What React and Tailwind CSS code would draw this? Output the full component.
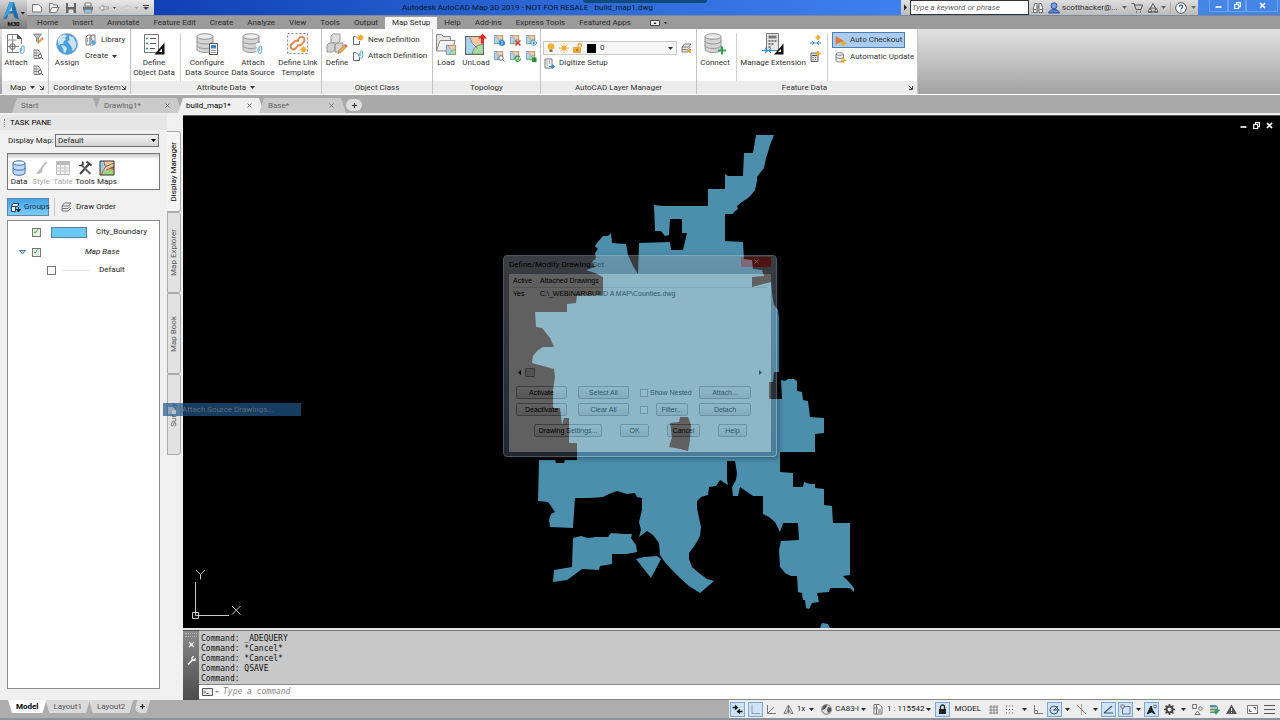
import React from 'react';

const menuTabs = [
  'Home', 'Insert', 'Annotate', 'Feature Edit', 'Create', 'Analyze', 'View', 'Tools',
  'Output', 'Map Setup', 'Help', 'Add-ins', 'Express Tools', 'Featured Apps',
];

const commandHistory = ['_ADEQUERY', '*Cancel*', '*Cancel*', 'QSAVE', ''];

// Small svg wrapper, every icon is drawn in its own pixel grid
function Svg({ w, h = w, children, className = '' }) {
  return (
    <svg width={w} height={h} viewBox={`0 0 ${w} ${h}`} fill="none" className={`shrink-0 ${className}`} aria-hidden="true">
      {children}
    </svg>
  );
}

function Caret({ className = '' }) {
  return (
    <Svg w={5} h={3} className={className}>
      <path d="M0 0h5L2.500 3z" fill="currentColor" />
    </Svg>
  );
}

function Launcher() {
  return (
    <Svg w={5}>
      <path d="M0.500 0.500L4 4M4.500 1v3.500H1" stroke="#444" />
    </Svg>
  );
}

/* ---------- ribbon icons ---------- */

const Star = ({ x, y }) => (
  <g transform={`translate(${x} ${y})`} stroke="#efa92b" strokeWidth="1.300">
    <path d="M0-3v6M-3 0h6M-2-2l4 4M2-2l-4 4" />
  </g>
);

const Clip = ({ x, y }) => (
  <path
    transform={`translate(${x} ${y})`}
    d="M0 3v3.500a1.700 1.700 0 0 0 3.600 0V2a1.200 1.200 0 0 0-2.400 0v4"
    stroke="#4b9fd0"
    strokeWidth="0.900"
  />
);

const Cylinder = ({ x = 0, y = 0 }) => (
  <g transform={`translate(${x} ${y})`} stroke="#8a8a8a" strokeWidth="0.900">
    <path d="M1 3.500v13c0 1.500 3.500 3 8 3s8-1.500 8-3v-13" fill="#d5d5d5" />
    <path d="M1 8c0 1.500 3.500 3 8 3s8-1.500 8-3M1 12.500c0 1.500 3.500 3 8 3s8-1.500 8-3" />
    <ellipse cx="9" cy="3.500" rx="8" ry="2.800" fill="#ececec" />
  </g>
);

const MapTile = ({ s = 1, x = 0, y = 0 }) => (
  <g transform={`translate(${x} ${y}) scale(${s})`}>
    <path d="M0 0h18v18H0z" fill="#a9d3f3" />
    <path d="M4 0h14v9l-6 3-5-5z" fill="#f7c9a3" />
    <path d="M18 8v10H7c0-6 4-10 11-10z" fill="#a7dda0" />
    <path d="M4 0l3 7 5 5M7 18c0-6 4-10 11-10" stroke="#777" strokeWidth="0.800" />
    <path d="M0.500 0.500h17v17H0.500z" stroke="#666" strokeWidth="1" />
  </g>
);

const AttachIcon = () => (
  <Svg w={22}>
    <path d="M2.500 1.500h10l4 4v14h-14z" fill="#fff" stroke="#777" />
    <path d="M12.500 1.500v4h4" fill="#555" stroke="#555" />
    <path d="M2.500 13.500h14M7.500 1.500v18M2.500 7h9" stroke="#888" strokeWidth="0.900" />
    <circle cx="7.500" cy="13.500" r="2.800" stroke="#666" fill="#e8e8e8" />
    <path d="M7.500 10v7M4 13.500h7" stroke="#666" strokeWidth="0.800" />
    <path d="M14 11h6v10h-6z" fill="#fff" />
    <Clip x={15.500} y={12} />
  </Svg>
);

const FilterIcon = () => (
  <Svg w={11}>
    <path d="M0.500 1h8L5.500 5v5l-2-1.500V5z" fill="#bbb" stroke="#777" strokeWidth="0.800" />
    <path d="M5.500 9.500L9.500 5.500" stroke="#e9a23a" strokeWidth="2" />
    <path d="M9 6l1-1" stroke="#d66" strokeWidth="2" />
  </Svg>
);

const SheetSearchIcon = () => (
  <Svg w={11}>
    <path d="M1 1h4l2.500 2.500V9.500H1z" stroke="#777" fill="#fff" strokeWidth="0.900" />
    <path d="M1 4h6M1 6.500h5M3 1v8.500" stroke="#777" strokeWidth="0.800" />
    <circle cx="7" cy="7" r="1.800" stroke="#666" fill="#eee" strokeWidth="0.900" />
    <path d="M8.300 8.300l2 2" stroke="#555" />
  </Svg>
);

const GlobeIcon = () => (
  <Svg w={22}>
    <circle cx="11" cy="11" r="10.500" fill="#4a9fdc" stroke="#8da8bb" strokeWidth="0.800" />
    <path d="M2 6c2-3 4-4 7-4.500l2 1.500-2 2 1 2-2 1-1 3-3 0-1 2-1-4zM13 3l4 1 3.500 6-1 5-3 3-1-4-2-3-2-2 2-2zM5 12l4 1 2 2-1 4-2 1-1-4z" fill="#c9e4f7" />
  </Svg>
);

const LibraryIcon = () => (
  <Svg w={12}>
    <path d="M1 3l2-2h3v8l-2 2H1zM5 3l2-2h3v8l-2 2H5z" fill="#e8e8e8" stroke="#777" strokeWidth="0.900" />
    <path d="M2 5h1M6 5h1M2 7h1" stroke="#555" />
    <circle cx="8.500" cy="8.500" r="2.800" fill="#57a7dd" stroke="#fff" strokeWidth="0.500" />
  </Svg>
);

const ObjectDataIcon = () => (
  <Svg w={22}>
    <path d="M1.500 1.500h14v18h-14z" fill="#fff" stroke="#777" />
    <path d="M7 5.500h6M7 10.500h6M7 15.500h5" stroke="#555" />
    <path d="M3 5.500h2M3 15.500h2" stroke="#3b9a68" strokeWidth="1.500" />
    <path d="M3 10.500h2" stroke="#3b8cc0" strokeWidth="1.500" />
    <path d="M21.500 9.500v12H11.500z" fill="#111" />
    <path d="M19 15.500v3.500h-3z" fill="#fff" />
  </Svg>
);

const ConfigureIcon = () => (
  <Svg w={22}>
    <Cylinder />
    <path d="M13.500 10.500h8v11h-8z" fill="#fff" stroke="#555" />
    <path d="M15 12h5v3.500h-5z" fill="#2f86cf" />
    <path d="M15 17.500h5M15 19.500h5" stroke="#777" strokeWidth="0.800" />
  </Svg>
);

const AttachSourceIcon = () => (
  <Svg w={22}>
    <Cylinder />
    <path d="M14.500 10h7v12h-7z" fill="#fff" />
    <Clip x={16} y={12} />
  </Svg>
);

const LinkTemplateIcon = () => (
  <Svg w={22}>
    <path d="M0.500 0.500h20v20H0.500z" fill="#f8f8f8" stroke="#888" strokeDasharray="2 2" />
    <g stroke="#dd8a48" strokeWidth="1.800">
      <path d="M9.500 8.500l3-3.500a2.800 2.800 0 0 1 4.500 0c1 1.500.500 3-.500 4l-2 2.500c-1.500 1.500-3.500 1-4 0" />
      <path d="M12 8.500c-1.500-1.500-3.500-1-4.500 0L4.500 11.500a2.800 2.800 0 0 0 4 4l3-3.500" />
    </g>
    <Star x={16.500} y={16.500} />
  </Svg>
);

const DefineClassIcon = () => (
  <Svg w={22}>
    <path d="M5 3l2-2h7v7l-2 2H5z" fill="#ddd" stroke="#999" />
    <path d="M1 12l2-2h6v6l-2 3H1zM9 12l2-2h6v6l-2 3H9z" fill="#d2d2d2" stroke="#999" />
    <path d="M12 20.500l1-3 6-6 2 2-6 6z" fill="#eeb04a" stroke="#a07030" strokeWidth="0.600" />
    <path d="M18 12.500l2 2 1.500-1.500-2-2z" fill="#e06a5a" />
  </Svg>
);

const NewDefIcon = ({ clip }) => (
  <Svg w={12}>
    <path d="M3.500 2.500H1.500v8h6V7" stroke="#666" />
    <path d="M4 2.500L7.500 6" stroke="#777" />
    {clip ? <Clip x={7} y={0} /> : <Star x={8.500} y={3.500} />}
  </Svg>
);

const LoadIcon = () => (
  <Svg w={22}>
    <path d="M1.500 18V1.500h5l2 2h7v4" fill="#e6e6e6" stroke="#888" />
    <path d="M1.500 18L5 7.500h15L17.500 18z" fill="#f2f2f2" stroke="#888" />
    <MapTile s={0.55} x={11} y={12} />
  </Svg>
);

const UnloadIcon = () => (
  <Svg w={22}>
    <MapTile s={1.05} x={0} y={3} />
    <path d="M17.500 0.500l4.500 5h-3v5h-3v-5h-3z" fill="#e02b2b" />
  </Svg>
);

const TopoIcon = ({ kind }) => (
  <Svg w={11}>
    <MapTile s={0.5} />
    {kind === 0 && <circle cx="8" cy="8" r="3" fill="#2f86cf" />}
    {kind === 0 && <path d="M8 6v1M8 7.600v2" stroke="#fff" />}
    {kind === 1 && <path d="M5.500 5.500l5 5M10.500 5.500l-5 5" stroke="#d83a34" strokeWidth="1.500" />}
    {kind === 2 && <path d="M4.500 8c2-3 4-3 6.500 0-2.500 3-4.500 3-6.500 0z" fill="#fff" stroke="#3f8fd0" />}
    {kind === 2 && <circle cx="7.700" cy="8" r="1.200" fill="#3f8fd0" />}
    {kind === 3 && <circle cx="7" cy="7" r="2.200" fill="#fff" stroke="#777" />}
    {kind === 3 && <path d="M8.500 8.500l2 2" stroke="#777" />}
    {kind === 4 && <path d="M5 8a3 3 0 0 1 5-2M10.500 7.500a3 3 0 0 1-5 2" stroke="#3da050" strokeWidth="1.400" />}
    {kind === 5 && <path d="M6 6.500h4.500V11H6z" fill="#2c9140" />}
  </Svg>
);

const BulbIcon = () => (
  <Svg w={8} h={10}>
    <circle cx="4" cy="3.500" r="3.300" fill="#f2b135" />
    <path d="M2.500 6.500h3v2.500h-3z" fill="#8a7040" />
  </Svg>
);

const SunIcon = () => (
  <Svg w={10}>
    <circle cx="5" cy="5" r="2.600" fill="#f0aa2d" />
    <path d="M5 0v1.500M5 8.500V10M0 5h1.500M8.500 5H10M1.500 1.500l1 1M7.500 7.500l1 1M8.500 1.500l-1 1M1.500 8.500l1-1" stroke="#f0aa2d" />
  </Svg>
);

const UnlockIcon = () => (
  <Svg w={10}>
    <path d="M0.500 4.500h7v5h-7z" fill="#f2ab2d" stroke="#d58e18" strokeWidth="0.600" />
    <path d="M5 4.500V2.500a1.700 1.700 0 0 1 3.500 0V4" stroke="#e9a22a" strokeWidth="1.300" />
    <path d="M4 6v2" stroke="#7a5510" />
  </Svg>
);

const LayersIcon = ({ star }) => (
  <Svg w={11}>
    <path d="M3.500 1h6.500L7.500 4H1zM1 4v2.500h6L10 3.500M1 6.500V9h6l3-3" stroke="#666" strokeWidth="0.900" fill="#eee" />
    {star && <path d="M5.500 6l4 4M8 6.500l2 2" stroke="#e0a13a" strokeWidth="1.500" />}
  </Svg>
);

const DigitizeIcon = () => (
  <Svg w={11}>
    <path d="M1 1h7v9H1z" stroke="#777" fill="#fff" />
    <path d="M2.500 3h1M5 3h1M2.500 5h1M5 5h1M2.500 7h1" stroke="#444" />
    <path d="M5 8.500h5M8 6.500l2.500 2L8 10.500" stroke="#2f86cf" strokeWidth="1.200" />
  </Svg>
);

const ConnectIcon = () => (
  <Svg w={22}>
    <Cylinder />
    <path d="M18 13.500v8M14 17.500h8" stroke="#2f9e50" strokeWidth="2" />
  </Svg>
);

const ExtensionIcon = () => (
  <Svg w={22}>
    <path d="M4.500 0.500h12v17h-12z" fill="#e6e6e6" stroke="#777" />
    <path d="M6.500 2.500h8v3h-8z" fill="#777" />
    <path d="M6.500 8h2M9.500 8h2M12.500 8h2M6.500 11h2M9.500 11h2M6.500 14h2" stroke="#555" strokeWidth="1.500" />
    <path d="M0 17.500h12M3 15l2.500 2.500L3 20M9 15l-2 2.500L9 20" stroke="#2f86cf" strokeWidth="1.200" />
    <path d="M21.500 10.500v11H12z" fill="#111" />
    <path d="M19 16v3h-3z" fill="#fff" />
  </Svg>
);

const MiniExtIcon = ({ calc }) => (
  <Svg w={11}>
    {calc ? (
      <g>
        <path d="M1 2h7v8.500H1z" fill="#ddd" stroke="#666" />
        <path d="M2 4.500h5M2.500 6.500h1M5 6.500h1M2.500 8.500h1M5 8.500h1" stroke="#555" />
      </g>
    ) : (
      <path d="M0 8h11M2 6.300L4 8 2 9.700M9 6.300L7 8l2 1.700" stroke="#3a8ecb" />
    )}
    <path d="M8 0v5M5.500 2.500h5" stroke="#efa92b" strokeWidth="1.800" />
  </Svg>
);

const CheckoutIcon = () => (
  <Svg w={11}>
    <path d="M0.500 1v8.500L9 6z" fill="#e0783c" />
    <path d="M8.500 6v5M6 8.500h5" stroke="#efa92b" strokeWidth="1.800" />
  </Svg>
);

const UpdateIcon = () => (
  <Svg w={11}>
    <path d="M1 2v6.500c0 2 7.500 2 7.500 0V2" fill="#eee" stroke="#777" strokeWidth="0.900" />
    <ellipse cx="4.700" cy="2" rx="3.700" ry="1.300" fill="#fff" stroke="#777" strokeWidth="0.900" />
    <path d="M1 5c0 2 7.500 2 7.500 0" stroke="#777" strokeWidth="0.900" />
    <path d="M8.500 6v5M6 8.500h5" stroke="#efa92b" strokeWidth="1.600" />
  </Svg>
);

/* ---------- ribbon parts ---------- */

function BigButton({ icon, lines, className }) {
  return (
    <button type="button" className={`flex shrink-0 flex-col items-center ${className}`}>
      {icon}
      <span className="mt-[3px] block whitespace-nowrap text-center leading-[10px]">
        {lines.map((line) => (
          <span key={line} className="block">{line}</span>
        ))}
      </span>
    </button>
  );
}

function SmallButton({ icon, children, className = '' }) {
  return (
    <button type="button" className={`flex h-4 items-center gap-1 whitespace-nowrap ${className}`}>
      {icon}
      {children}
    </button>
  );
}

function Panel({ title, caret, launcher, className, children }) {
  return (
    <section className={`flex shrink-0 flex-col border-r border-[#c4c4c4] bg-white ${className}`}>
      <div className="flex flex-1 items-start pt-1">{children}</div>
      <div className="flex h-[13px] items-center bg-[#ececec] px-1">
        <h2 className="flex flex-1 items-center justify-center gap-1 whitespace-nowrap">
          {title}
          {caret && <Caret />}
        </h2>
        {launcher && <Launcher />}
      </div>
    </section>
  );
}

const Divider = () => <div className="mx-[3px] h-12 w-px shrink-0 bg-[#cfcfcf]" />;

function Ribbon() {
  return (
    <div className="flex h-[66px] shrink-0 border-b border-white bg-linear-to-b from-[#e2e2e2] to-[#a2a2a2] pl-[2px] text-[#333]">
      <Panel title="Map" caret launcher className="w-[47px]">
        <BigButton icon={<AttachIcon />} lines={['Attach']} className="w-7" />
        <div className="flex flex-col gap-[5px] pl-[3px]">
          <button type="button" aria-label="Filter"><FilterIcon /></button>
          <button type="button" aria-label="Query"><SheetSearchIcon /></button>
          <button type="button" aria-label="Query library"><SheetSearchIcon /></button>
        </div>
      </Panel>
      <Panel title="Coordinate System" launcher className="w-[82px]">
        <BigButton icon={<GlobeIcon />} lines={['Assign']} className="w-9" />
        <div>
          <SmallButton icon={<LibraryIcon />} className="-mt-px">Library</SmallButton>
          <SmallButton>Create <Caret /></SmallButton>
        </div>
      </Panel>
      <Panel title="Attribute Data" caret className="w-[191px]">
        <BigButton icon={<ObjectDataIcon />} lines={['Define', 'Object Data']} className="w-[46px]" />
        <Divider />
        <BigButton icon={<ConfigureIcon />} lines={['Configure', 'Data Source']} className="w-[46px]" />
        <BigButton icon={<AttachSourceIcon />} lines={['Attach', 'Data Source']} className="w-[46px]" />
        <BigButton icon={<LinkTemplateIcon />} lines={['Define Link', 'Template']} className="w-11" />
      </Panel>
      <Panel title="Object Class" className="w-[111px]">
        <BigButton icon={<DefineClassIcon />} lines={['Define']} className="w-[30px]" />
        <div>
          <SmallButton icon={<NewDefIcon />} className="-mt-px">New Definition</SmallButton>
          <SmallButton icon={<NewDefIcon clip />}>Attach Definition</SmallButton>
        </div>
      </Panel>
      <Panel title="Topology" className="w-[108px]">
        <BigButton icon={<LoadIcon />} lines={['Load']} className="w-[26px]" />
        <BigButton icon={<UnloadIcon />} lines={['UnLoad']} className="w-[34px]" />
        <div className="grid grid-cols-3 gap-x-[5px] gap-y-[5px] pl-px pt-[2px]">
          {['Info', 'Delete', 'Show', 'Audit', 'Refresh', 'Save'].map((name, i) => (
            <button key={name} type="button" aria-label={name}><TopoIcon kind={i} /></button>
          ))}
        </div>
      </Panel>
      <Panel title="AutoCAD Layer Manager" className="w-[156px]">
        <div className="flex flex-1 flex-col pl-[2px]">
          <div className="mt-2 flex items-center">
            <div className="flex h-[14px] w-[134px] items-center gap-1 border border-[#c8c8c8] bg-[#f7f7f7] px-[3px]">
              <BulbIcon />
              <SunIcon />
              <UnlockIcon />
              <span className="h-[9px] w-[9px] bg-black" />
              <select aria-label="Layer" className="min-w-0 flex-1 appearance-none bg-transparent outline-none">
                <option>0</option>
              </select>
              <Caret />
            </div>
            <button type="button" aria-label="Layer properties" className="pl-1"><LayersIcon star /></button>
          </div>
          <SmallButton icon={<DigitizeIcon />} className="px-px">Digitize Setup</SmallButton>
        </div>
      </Panel>
      <Panel title="Feature Data" launcher className="w-[221px]">
        <BigButton icon={<ConnectIcon />} lines={['Connect']} className="w-9" />
        <Divider />
        <BigButton icon={<ExtensionIcon />} lines={['Manage Extension']} className="w-[66px]" />
        <div className="flex flex-col gap-[5px] pl-1 pr-[3px] pt-[2px]">
          <button type="button" aria-label="New join"><MiniExtIcon /></button>
          <button type="button" aria-label="New calculation"><MiniExtIcon calc /></button>
        </div>
        <Divider />
        <div className="flex flex-col items-start gap-px pl-px">
          <SmallButton icon={<CheckoutIcon />} className="-mt-px border border-[#4a7fb5] bg-[#a9cdf1] px-[2px]">Auto Checkout</SmallButton>
          <SmallButton icon={<UpdateIcon />} className="pl-[3px]">Automatic Update</SmallButton>
        </div>
      </Panel>
    </div>
  );
}

/* ---------- title bar and menu ---------- */

function AppLogo() {
  return (
    <button type="button" aria-label="Application menu" className="relative h-[29px] w-[27px] shrink-0 bg-linear-to-b from-[#d6d6d6] to-[#7a7a7a] text-black">
      <Svg w={27} h={29}>
        <path d="M3 19.500L9.500 2h4.500l5 17.500-4.500-1.500-1.500-4.500H8.500L7 18.500z" fill="#1f6fae" />
        <path d="M9.500 2h4.500l-3.500 9.500-7 7.500z" fill="#3ba0dc" />
        <path d="M9.500 11h3l-1.200-4z" fill="#d0d0d0" />
        <path d="M20.500 12h4.500l-2.200 2.500z" fill="#222" />
      </Svg>
      <span className="absolute inset-x-0 bottom-px text-center text-[6px] font-bold leading-[8px]">M30</span>
    </button>
  );
}

function QuickAccess() {
  return (
    <div className="flex w-[127px] shrink-0 items-center gap-[5px] bg-linear-to-b from-[#e9e9e9] to-[#c3c3c3] pl-1 text-[#444]">
      <button type="button" aria-label="New">
        <Svg w={12}><path d="M1.500 2.500h6l3 2.500v5h-9z" fill="#fff" stroke="#777" /></Svg>
      </button>
      <button type="button" aria-label="Open">
        <Svg w={12}><path d="M1.500 10.500v-9h3l1 1.500h4v2M1.500 10.500l2.500-5h7l-2.500 5z" fill="#f4f4f4" stroke="#777" /></Svg>
      </button>
      <button type="button" aria-label="Save">
        <Svg w={12}><path d="M1 1h10v10H1z" fill="#666" /><path d="M3 1h6v4H3zM3.500 7.500h5V11h-5z" fill="#ddd" /></Svg>
      </button>
      <button type="button" aria-label="Plot">
        <Svg w={12}><path d="M3 1h6v3H3z" fill="#fff" stroke="#777" /><path d="M1 4.500h10v4H1z" fill="#777" /><path d="M2.500 7.500h7v3.500h-7z" fill="#8fc3ea" stroke="#777" strokeWidth="0.600" /></Svg>
      </button>
      <button type="button" aria-label="Undo" className="flex items-center gap-1">
        <Svg w={10}><path d="M0.500 5L4 2v2h5.500v2H4v2z" fill="#eee" stroke="#888" strokeWidth="0.800" /></Svg>
        <Svg w={3} h={2}><path d="M0 0h3L1.500 2z" fill="#444" /></Svg>
      </button>
      <button type="button" aria-label="Redo" className="flex items-center gap-1">
        <Svg w={10}><path d="M9.500 5L6 2v2H0.500v2H6v2z" fill="#ddd" stroke="#c4c4c4" strokeWidth="0.800" /></Svg>
        <Svg w={3} h={2}><path d="M0 0h3L1.500 2z" fill="#999" /></Svg>
      </button>
      <button type="button" aria-label="Customize">
        <Svg w={6}><path d="M0 0.500h6" stroke="#444" /><path d="M0 2h6L3 5z" fill="#444" /></Svg>
      </button>
    </div>
  );
}

function InfoCenter() {
  return (
    <div className="flex w-[297px] shrink-0 items-center bg-linear-to-b from-[#dedede] to-[#bcbcbc] text-[#333]">
      <Svg w={9} h={7}><path d="M3 0.500v6l3-3z" fill="#222" /></Svg>
      <input
        type="text"
        aria-label="Search"
        placeholder="Type a keyword or phrase"
        className="h-[15px] w-[119px] shrink-0 border border-[#333] bg-white px-px italic outline-none placeholder:text-[#666]"
      />
      <Svg w={12} className="ml-[3px]">
        <path d="M1.500 10.500v-5l1.500-4h2v9zM7 10.500v-9h2l1.500 4v5z" fill="#f4f4f4" stroke="#666" />
        <path d="M5 5h2M2 7.500h2.500M7.500 7.500H10" stroke="#666" />
      </Svg>
      <Svg w={12} className="ml-1">
        <circle cx="6" cy="3.800" r="3" fill="#7d9fdf" stroke="#31519c" />
        <path d="M0.500 11c1-3 3-3.500 5.500-3.500s4.500.500 5.500 3.500z" fill="#5c82cf" stroke="#31519c" />
      </Svg>
      <span className="ml-[2px] whitespace-nowrap">scotthacker@...</span>
      <Caret className="ml-1 text-[#666]" />
      <Svg w={12} className="ml-1">
        <path d="M0.500 1.500H3l2 6h5l1.500-4.500H3.500" stroke="#555" />
        <path d="M5 10h1M9 10h1" stroke="#555" strokeWidth="1.500" />
      </Svg>
      <Svg w={12} className="ml-1">
        <path d="M6 1.500l2.500 4.500h-5zM3 6l2 4H1zM9 6l2 4H7.500zM1 10h10" stroke="#555" fill="#eee" />
      </Svg>
      <Caret className="ml-[2px] text-[#666]" />
      <span className="ml-1 h-3 w-px bg-[#aaa]" />
      <Svg w={12} className="ml-1">
        <circle cx="6" cy="6" r="5.300" fill="#fff" stroke="#555" />
        <path d="M4.300 4.800c0-2.300 3.600-2.300 3.400 0C7.600 6 6 6 6 7.500M6 8.500v1" stroke="#2453b0" strokeWidth="1.200" />
      </Svg>
      <Caret className="ml-1 text-[#666]" />
    </div>
  );
}

function WindowControls({ className, boxed }) {
  const cell = boxed
    ? 'flex items-center justify-center border border-[#88b4f0]/60 border-t-0'
    : 'flex items-center justify-center';
  return (
    <div className={className}>
      <button type="button" aria-label="Minimize" className={cell}>
        <Svg w={7}><path d="M0.500 5h6" stroke="#fff" strokeWidth="1.600" /></Svg>
      </button>
      <button type="button" aria-label="Restore" className={cell}>
        <Svg w={7}><path d="M2.500 2V0.700h4v4H5M0.700 2.500h4v4h-4z" stroke="#fff" strokeWidth="1.200" /></Svg>
      </button>
      <button type="button" aria-label="Close" className={cell}>
        <Svg w={7}><path d="M1 1l5 5M6 1L1 6" stroke="#fff" strokeWidth="1.700" /></Svg>
      </button>
    </div>
  );
}

function Header() {
  return (
    <header className="flex h-[29px] shrink-0 bg-[#9b9b9b]">
      <AppLogo />
      <div className="flex min-w-0 flex-1 flex-col">
        <div className="flex h-4 border-b border-[#7f8790]">
          <QuickAccess />
          <div className="relative flex min-w-0 flex-1 items-center justify-center bg-linear-to-r from-[#1040b4] via-[#2a66d4] to-[#3d80ee]">
            <h1 className="whitespace-pre text-[#08152e]">Autodesk AutoCAD Map 3D 2019 - NOT FOR RESALE   build_map1.dwg</h1>
            <div className="absolute right-[194px] top-0 h-[3px] w-[124px] rounded-b-sm bg-[#0f4a7c]" />
          </div>
          <InfoCenter />
          <WindowControls boxed className="grid w-[82px] shrink-0 grid-cols-[19px_18px_32px] items-stretch bg-[#4585e6] pb-[3px] pl-[11px]" />
        </div>
        <nav className="flex flex-1 items-end pl-[3px] text-[#2b2b2b]">
          {menuTabs.map((tab) => (
            <a
              key={tab}
              href="#"
              className={
                tab === 'Map Setup'
                  ? 'flex h-3 items-center whitespace-nowrap bg-[#f4f4f4] px-[7px]'
                  : 'flex h-3 items-center whitespace-nowrap px-[7px]'
              }
            >
              {tab}
            </a>
          ))}
          <button type="button" aria-label="Minimize ribbon" className="mb-[3px] ml-3 flex items-center gap-1">
            <Svg w={10} h={6}><path d="M0.500 0.500h9v5h-9z" fill="#eee" stroke="#444" /><path d="M3.500 4L5 2l1.500 2z" fill="#222" /></Svg>
            <Svg w={3} h={2}><path d="M0 0h3L1.500 2z" fill="#222" /></Svg>
          </button>
        </nav>
      </div>
    </header>
  );
}

function CloseMark() {
  return <Svg w={5}><path d="M0.500 0.500l4 4M4.500 0.500l-4 4" stroke="#777" /></Svg>;
}

function FileTabs() {
  const slant = '[clip-path:polygon(5px_0,calc(100%_-_5px)_0,100%_100%,0_100%)]';
  return (
    <div className="flex h-[18px] shrink-0 items-start bg-[#a9a9a9] pl-3 pt-[3px] text-[#666]">
      <button type="button" className={`h-[15px] w-[86px] bg-[#cacaca] pl-[9px] text-left ${slant}`}>Start</button>
      <button type="button" className={`-ml-[3px] flex h-[15px] w-[87px] items-center justify-between bg-[#cacaca] pl-[9px] pr-3 ${slant}`}>
        Drawing1* <CloseMark />
      </button>
      <button type="button" className={`-ml-1 flex h-[15px] w-[86px] items-center justify-between bg-[#efefef] pl-2 pr-3 text-black ${slant}`}>
        build_map1* <CloseMark />
      </button>
      <button type="button" className={`-ml-[5px] flex h-[15px] w-[87px] items-center justify-between bg-[#cacaca] pl-[9px] pr-3 ${slant}`}>
        Base* <CloseMark />
      </button>
      <button type="button" aria-label="New drawing" className="mt-px flex h-3 w-4 items-center justify-center rounded-md bg-[#dedede]">
        <Svg w={5}><path d="M2.500 0v5M0 2.500h5" stroke="#333" strokeWidth="1.200" /></Svg>
      </button>
    </div>
  );
}

/* ---------- task pane ---------- */

const paneTools = [
  {
    name: 'Data',
    icon: (
      <Svg w={16}>
        <path d="M2 3v10c0 3 12 3 12 0V3" fill="#bcdaf5" stroke="#3f6ea8" />
        <path d="M2 8c0 3 12 3 12 0" stroke="#3f6ea8" />
        <ellipse cx="8" cy="3" rx="6" ry="2.200" fill="#eaf4fd" stroke="#3f6ea8" />
      </Svg>
    ),
  },
  {
    name: 'Style',
    disabled: true,
    icon: (
      <Svg w={16}>
        <path d="M13.500 2L8 9" stroke="#bbb" strokeWidth="2" />
        <path d="M8.500 8.500c-3 0-3 4-6 5 3 1 7 0 7-3.500z" fill="#bbb" />
      </Svg>
    ),
  },
  {
    name: 'Table',
    disabled: true,
    icon: (
      <Svg w={16}>
        <path d="M1.500 1.500h13v13h-13z" fill="#f4f4f4" stroke="#bbb" />
        <path d="M1.500 3.500h13" stroke="#bbb" strokeWidth="3" />
        <path d="M1.500 8h13M1.500 11h13M5.500 4v10M10 4v10" stroke="#c4c4c4" />
      </Svg>
    ),
  },
  {
    name: 'Tools',
    icon: (
      <Svg w={16}>
        <path d="M3 14L12 4" stroke="#444" strokeWidth="2" />
        <path d="M9.500 1.500L14.500 5.500" stroke="#444" strokeWidth="2.200" />
        <path d="M13.500 14L5 5.500" stroke="#666" strokeWidth="2" />
        <path d="M1.500 4.500c0 2 3 2.500 4.500 1s1-4-1-4v2.500l-2 1z" fill="#444" />
      </Svg>
    ),
  },
  {
    name: 'Maps',
    icon: (
      <Svg w={16}>
        <path d="M1 1h14v14H1z" fill="#f3c59b" />
        <path d="M1 1h3l1 6-2 4-2 1z" fill="#94cdef" />
        <path d="M3 15l2-4 4-1 3-2 3 2v5z" fill="#9bd77f" />
        <path d="M10 9l5-3v4z" fill="#e35d4d" />
        <path d="M4 1c3 2 0 5 3 5s4-2 8-3M7 6c-1 3-4 4-4 9M7 10c3 0 4-3 8-3" stroke="#555" strokeWidth="0.800" />
        <path d="M1 1h14v14H1z" stroke="#333" />
      </Svg>
    ),
  },
];

const sideTabs = ['Display Manager', 'Map Explorer', 'Map Book', 'Survey'];

const checkboxCls =
  "grid h-[9px] w-[9px] shrink-0 appearance-none place-content-center border border-[#777] bg-white text-[8px] leading-none text-[#1f7a2f] checked:bg-[#e4f3e4] checked:before:content-['✓']";

function TaskPane() {
  return (
    <aside className="relative flex w-[183px] shrink-0 bg-[#f0f0f0]">
      <div className="flex w-[167px] flex-col pb-[11px]">
        <div className="flex h-[15px] items-center bg-[#e6e6e6] pl-1">
          <span className="mr-[5px] h-2 border-l border-dotted border-[#888]" />
          <h2 className="text-black">TASK PANE</h2>
        </div>
        <div className="mr-2 mt-1 flex items-center justify-between pl-2">
          <label htmlFor="displayMap" className="whitespace-nowrap">Display Map:</label>
          <div className="relative flex h-[13px] w-[104px] items-center border border-[#6f6f6f] bg-linear-to-b from-[#f2f2f2] to-[#d4d4d4] px-[2px]">
            <select id="displayMap" className="min-w-0 flex-1 appearance-none bg-transparent outline-none">
              <option>Default</option>
            </select>
            <Caret className="text-black" />
          </div>
        </div>
        <div className="ml-[7px] mr-[7px] mt-[6px] flex h-[37px] items-end gap-[2px] border border-[#777] bg-white bg-linear-to-b from-[#c8c8c8] to-white to-15% pb-[2px] pl-px">
          {paneTools.map((tool) => (
            <button
              key={tool.name}
              type="button"
              disabled={tool.disabled}
              className="flex w-5 flex-col items-center gap-px disabled:text-[#aaa]"
            >
              {tool.icon}
              <span className="leading-[10px]">{tool.name}</span>
            </button>
          ))}
        </div>
        <div className="ml-[7px] mr-[7px] mt-[8px] flex h-[18px] items-stretch">
          <button type="button" className="flex w-[42px] items-center gap-[3px] whitespace-nowrap border border-[#5c88a8] bg-linear-to-b from-[#3fa4e6] to-[#7fcbf7] pl-[2px] text-[#12314a]">
            <Svg w={11}>
              <path d="M3 1.500h6l-1.500 3H1.500zM1.500 4.500v5h4V5" fill="#e6eef4" stroke="#234" strokeWidth="0.900" />
              <path d="M8.500 5v4M6.500 7.500l2 2.500 2-2.500z" stroke="#123" fill="#123" strokeWidth="0.800" />
            </Svg>
            Groups
          </button>
          <span className="mx-[5px] w-px bg-[#c8c8c8]" />
          <button type="button" className="flex items-center gap-1 whitespace-nowrap pl-px">
            <LayersIcon />
            Draw Order
          </button>
        </div>
        <div className="ml-[7px] mr-[7px] mt-1 flex-1 border border-[#8a8a8a] bg-white text-[#222]">
          <ul className="pt-[2px]">
            <li className="flex h-[18px] items-center pl-6">
              <input id="city" type="checkbox" defaultChecked className={checkboxCls} />
              <span className="ml-[10px] h-[11px] w-9 border border-[#5a7f96] bg-[#6ac9f5]" />
              <label htmlFor="city" className="ml-[9px]">City_Boundary</label>
            </li>
            <li className="flex h-[22px] items-center">
              <Svg w={7} h={5} className="ml-[11px]"><path d="M0.500 0.500h6L3.500 4z" fill="#b9cbe0" stroke="#5d7ba0" /></Svg>
              <input id="base" type="checkbox" defaultChecked className={`ml-[6px] ${checkboxCls}`} />
              <label htmlFor="base" className="ml-11 italic">Map Base</label>
            </li>
            <li className="flex h-[14px] items-center pl-[39px]">
              <input id="default" type="checkbox" className={checkboxCls} />
              <span className="ml-[6px] h-px w-7 bg-[#e0e0e0]" />
              <label htmlFor="default" className="ml-[9px]">Default</label>
            </li>
          </ul>
        </div>
      </div>
      <div role="tablist" className="flex w-[14px] flex-col pt-4">
        {sideTabs.map((tab, i) => (
          <button
            key={tab}
            type="button"
            role="tab"
            aria-selected={i === 0}
            className={`flex h-[81px] w-[14px] items-center justify-center rounded-r-[3px] border border-[#aaa] ${
              i === 0 ? 'border-l-0 bg-[#f4f4f4] text-black' : 'bg-[#e2e2e2] text-[#555]'
            }`}
          >
            <span className="rotate-180 whitespace-nowrap [writing-mode:vertical-rl]">{tab}</span>
          </button>
        ))}
      </div>
      {/* fading context menu entry */}
      <div className="absolute left-[163px] top-[288px] z-10 flex h-[13px] w-[138px] items-center gap-[5px] whitespace-nowrap bg-[#1f5788]/70 pl-1 text-[#5d6a76]">
        <Svg w={10}><path d="M1 2h5l2 2v5H1z" fill="#8fa5b8" /><path d="M5 5h4v4H5z" fill="#b4c0ca" /></Svg>
        Attach Source Drawings...
      </div>
    </aside>
  );
}

/* ---------- drawing area ---------- */

const cityOutline =
  '756,135 774,135 770,145 768,152 766,158 764,168 760,173 757,177 757,181 755,190 752,194 748,198 742,202 737,206 738,209 734,212 733,214 725,214 725,241 743,242 744,259 752,260 753,269 762,270 764,276 752,277 752,287 771,282 772,293 774,305 778,310 779,318 779,372 774,372 773,382 769,382 769,399 782,399 781,380 785,381 788,379 794,379 797,381 797,391 802,392 803,400 808,401 810,417 824,418 824,433 815,434 815,452 780,452 780,472 793,473 793,487 803,487 804,482 810,484 815,484 815,488 824,489 824,505 832,506 833,523 850,523 850,575 843,576 849,582 854,588 854,592 850,588 830,588 829,592 817,593 819,602 812,603 809,609 806,608 805,600 803,600 802,593 798,592 797,576 791,576 785,573 782,569 780,567 779,550 781,541 799,540 798,523 783,523 780,532 775,522 769,517 763,514 763,496 753,496 740,487 738,496 733,496 732,487 736,480 737,473 735,461 727,461 727,480 728,485 720,480 716,486 709,487 708,495 701,497 697,501 697,508 699,518 701,527 700,536 695,545 689,553 689,559 692,567 699,573 707,579 714,581 700,593 689,586 680,578 671,569 664,561 660,555 659,543 653,535 647,531 643,534 639,537 641,530 639,522 642,510 642,498 637,497 635,493 627,494 617,491 609,494 603,497 590,498 575,498 573,528 550,527 549,520 551,514 555,512 551,506 548,502 538,501 539,460 555,460 556,463 564,463 565,460 577,460 577,443 569,443 569,418 564,418 562,425 560,408 553,408 553,390 555,377 554,369 532,363 533,356 537,351 543,347 554,347 550,338 542,328 536,327 535,312 567,312 567,304 576,303 577,296 603,295 603,277 595,273 586,270 595,267 592,262 596,258 595,253 598,249 595,246 597,243 603,236 608,236 611,233 612,243 626,244 628,255 633,266 638,274 639,243 670,242 671,250 683,250 687,233 682,233 682,219 670,219 669,235 665,236 661,231 655,231 654,205 663,206 708,206 708,189 725,189 725,174 728,176 743,176 744,153 753,153';

const lowerPiece =
  '573,538 581,536 588,538 595,537 608,537 611,533 625,534 632,534 631,538 636,545 637,552 627,554 612,554 612,564 600,566 599,570 582,569 574,575 567,580 553,582 554,570 572,567';

function CityMap() {
  return (
    <svg viewBox="183 116 1097 512" preserveAspectRatio="xMidYMid meet" className="block h-full w-full" aria-label="City boundary map">
      <g fill="#4b8fad">
        <polygon points={cityOutline} />
        <polygon points={lowerPiece} />
        <polygon points="636,559 644,557 657,556 661,559 651,578" />
        <polygon points="820,628 822,623 828,624 830,628" />
      </g>
      <polygon points="680,417 688,417 691,425 690,440 688,451 680,449 669,447 672,437 670,423 679,422" fill="#000" />
      {/* ucs marker */}
      <g stroke="#c9c9c9" fill="none">
        <path d="M195.500 582v33.500H229M192.500 612.500h6v6h-6zM196 570l4.500 4.500L205 570M200.500 574.500v5M232 606l8.500 8.500M240.500 606l-8.500 8.500" />
      </g>
    </svg>
  );
}

const dialogButton =
  'flex h-[13px] items-center justify-center rounded-[2px] border border-[#999] bg-linear-to-b from-[#f4f4f4] to-[#d8d8d8] whitespace-nowrap';

const dialogCheckbox = 'h-2 w-2 shrink-0 appearance-none border border-[#999] bg-white';

function DrawingSetDialog() {
  return (
    <div
      role="dialog"
      aria-label="Define/Modify Drawing Set"
      className="absolute left-[320px] top-[139px] w-[274px] rounded-[4px] border border-[#c5d3dd] bg-linear-to-b from-[#8f9aa5] to-[#4a6480] px-[5px] pb-[4px] font-['Liberation_Sans',sans-serif] text-[7px] text-black opacity-40 shadow-[2px_2px_5px_#123]"
    >
      <div className="flex h-[18px] items-center justify-between">
        <h2 className="font-['Roboto',sans-serif] text-[8px]">Define/Modify Drawing Set</h2>
        <button type="button" aria-label="Close dialog" className="mb-[7px] flex h-[10px] w-[30px] items-center justify-center rounded-b-[2px] bg-[#c4342a]">
          <Svg w={5}><path d="M0.500 0.500l4 4M4.500 0.500l-4 4" stroke="#fff" /></Svg>
        </button>
      </div>
      <div className="bg-[#f0f0f0] px-1 pb-[15px] pt-px">
        <table className="w-full text-left leading-[12px]">
          <thead>
            <tr>
              <th className="w-[27px] font-normal">Active</th>
              <th className="font-normal">Attached Drawings</th>
            </tr>
          </thead>
          <tbody>
            <tr className="border-t border-[#ccc]">
              <td>Yes</td>
              <td>C:\_WEBINAR\BUILD A MAP\Counties.dwg</td>
            </tr>
          </tbody>
        </table>
        <div className="mt-[66px] flex h-[13px] items-center gap-1 px-[5px]">
          <Svg w={3} h={5}><path d="M3 0v5L0 2.500z" fill="#000" /></Svg>
          <span className="h-[9px] w-[10px] rounded-[1px] border border-[#888] bg-[#ccc]" />
          <span className="flex-1" />
          <Svg w={3} h={5}><path d="M0 0v5l3-2.500z" fill="#000" /></Svg>
        </div>
        <div className="mt-[7px] grid grid-cols-[51px_51px_48px_52px] gap-x-[11px] gap-y-[4px] px-[3px]">
          <button type="button" className={dialogButton}>Activate</button>
          <button type="button" className={dialogButton}>Select All</button>
          <label className="flex items-center gap-[2px] whitespace-nowrap">
            <input type="checkbox" className={dialogCheckbox} />
            Show Nested
          </label>
          <button type="button" className={dialogButton}>Attach...</button>
          <button type="button" className={dialogButton}>Deactivate</button>
          <button type="button" className={dialogButton}>Clear All</button>
          <div className="flex items-center justify-between">
            <input type="checkbox" aria-label="Use filter" className={dialogCheckbox} />
            <button type="button" className={`w-8 ${dialogButton}`}>Filter...</button>
          </div>
          <button type="button" className={dialogButton}>Detach</button>
        </div>
        <div className="mt-2 flex gap-[18px] pl-[21px]">
          <button type="button" className={`w-[68px] ${dialogButton}`}>Drawing Settings...</button>
          <button type="button" className={`w-[29px] ${dialogButton}`}>OK</button>
          <button type="button" className={`w-[33px] ${dialogButton}`}>Cancel</button>
          <button type="button" className={`w-[29px] ${dialogButton}`}>Help</button>
        </div>
      </div>
    </div>
  );
}

function CommandLine() {
  return (
    <div className="flex h-[72px] shrink-0 border-t-2 border-[#e4e4e4] font-['DejaVu_Sans_Mono',monospace] text-[#111]">
      <div className="flex w-4 shrink-0 flex-col items-center gap-2 border-t border-[#555] bg-linear-to-b from-[#8a8a8a] to-[#4c4c4c] pt-[2px]">
        <span className="h-1 w-3 border-y border-dotted border-[#b5b5b5]" />
        <button type="button" aria-label="Close command line" className="-mt-[4px]">
          <Svg w={7}><path d="M1 1l5 5M6 1L1 6" stroke="#fff" strokeWidth="1.300" /></Svg>
        </button>
        <button type="button" aria-label="Customize command line">
          <Svg w={9}><path d="M1 8.500L5.500 4" stroke="#fff" strokeWidth="1.500" /><path d="M5 1.500c-.500 2 1 3.500 3.500 3M7 .500c-2 0-2.500 2-1.500 3s3 .500 3-1.500" stroke="#fff" strokeWidth="1.200" /></Svg>
        </button>
      </div>
      <div className="flex min-w-0 flex-1 flex-col border-t border-[#777] bg-[#c8c8c8]">
        <div className="flex-1 pl-[2px] pt-[3px]">
          {commandHistory.map((cmd, i) => (
            <p key={i} className="leading-[10px]">Command: {cmd}</p>
          ))}
        </div>
        <div className="flex h-4 items-center border-b border-t border-[#888] bg-white pl-[3px]">
          <Svg w={11} h={8}><path d="M0.500 0.500h10v7H0.500z" fill="#eee" stroke="#555" /><path d="M2 2.500l1.500 1.500L2 5.500M4.500 5.500h2" stroke="#333" strokeWidth="0.900" /></Svg>
          <Svg w={4} h={2} className="ml-[2px]"><path d="M0 0h4L2 2z" fill="#888" /></Svg>
          <input
            type="text"
            aria-label="Command"
            placeholder="Type a command"
            className="ml-1 min-w-0 flex-1 italic outline-none placeholder:text-[#888]"
          />
        </div>
      </div>
    </div>
  );
}

/* ---------- status bar ---------- */

const statusOn = 'flex h-[15px] w-[15px] shrink-0 items-center justify-center border border-[#7ba7d6] bg-[#cfe3f8]';
const statusOff = 'flex h-[15px] w-[17px] shrink-0 items-center justify-center';

function StatusButton({ label, on, caret, children }) {
  return (
    <>
      <button type="button" aria-label={label} aria-pressed={!!on} className={on ? statusOn : statusOff}>
        <Svg w={11}>{children}</Svg>
      </button>
      {caret && <Caret className="mx-[3px]" />}
    </>
  );
}

function StatusBar() {
  return (
    <footer className="flex h-5 shrink-0 items-start justify-between border-b-2 border-[#8b929c] bg-[#adadad]">
      <div className="flex items-start pl-2 text-[#555]">
        {['Model', 'Layout1', 'Layout2'].map((name, i) => (
          <button
            key={name}
            type="button"
            className={`-mr-px flex h-[13px] items-center px-2 [clip-path:polygon(0_0,100%_0,calc(100%_-_4px)_100%,4px_100%)] ${
              i === 0 ? 'bg-white font-bold text-black' : 'bg-[#dadada]'
            }`}
          >
            {name}
          </button>
        ))}
        <button type="button" aria-label="New layout" className="ml-[2px] flex h-[13px] w-4 items-center justify-center rounded-bl-lg bg-[#dadada] [clip-path:polygon(3px_0,100%_0,calc(100%_-_4px)_100%,0_100%)]">
          <Svg w={5}><path d="M2.500 0v5M0 2.500h5" stroke="#222" strokeWidth="1.200" /></Svg>
        </button>
      </div>
      <div className="flex h-[18px] items-center bg-[#ededed] pl-px pr-[2px] text-[#222]">
        <StatusButton label="Constraints" on>
          <path d="M0.500 3.500H5M3 1.500l2.500 2L3 5.500M10.500 7.500H6M8 5.500l-2.500 2 2.500 2" stroke="#111" strokeWidth="1.300" />
        </StatusButton>
        <span className="w-[3px]" />
        <StatusButton label="Geolocation" on>
          <path d="M2 0.500V9.500H10" stroke="#999" />
        </StatusButton>
        <StatusButton label="Dynamic ucs">
          <path d="M1.500 1v8.500H10M1.500 9.500L8 3" stroke="#777" />
        </StatusButton>
        <StatusButton label="Annotation scale">
          <path d="M5.500 1L1 9.500h2.500l2-4.500 2 4.500H10z" stroke="#777" fill="#eee" />
          <path d="M5.500 1v8.500" stroke="#777" />
        </StatusButton>
        <button type="button" className="flex items-center gap-1 whitespace-nowrap">1x <Caret /></button>
        <span className="w-1" />
        <StatusButton label="Coordinate system">
          <circle cx="5.500" cy="5.500" r="4.800" fill="#ddd" stroke="#555" strokeWidth="0.800" />
          <path d="M2 2c2-1.500 4-1 4 0l-2 3-3 1zM7 3l3 1v3L7 9 6 6z" fill="#555" />
        </StatusButton>
        <button type="button" className="flex items-center gap-[2px] whitespace-nowrap">CA83-I <Caret /></button>
        <span className="w-1" />
        <StatusButton label="View scale">
          <path d="M1 0.500h5l3 2.500v7H1z" fill="#eee" stroke="#777" />
          <path d="M1 4h4M3.500 0.500v9.500M5 6h3M5 8h3" stroke="#777" />
        </StatusButton>
        <button type="button" className="flex items-center gap-[2px] whitespace-nowrap">1 : 115542 <Caret /></button>
        <span className="w-1" />
        <StatusButton label="Lock scale" on>
          <path d="M2 5h7v5H2z" fill="#222" />
          <path d="M3.500 5V3a2 2 0 0 1 4 0v2" stroke="#222" strokeWidth="1.300" />
        </StatusButton>
        <button type="button" className="px-1">MODEL</button>
        <StatusButton label="Grid">
          <path d="M3 1v9M6 1v9M9 1v9M1 3h9M1 6h9M1 9h9" stroke="#777" strokeWidth="0.800" />
        </StatusButton>
        <StatusButton label="Snap" caret>
          <path d="M1 2h9M1 5.500h9M1 9h9" stroke="#555" strokeDasharray="1 2" />
        </StatusButton>
        <StatusButton label="Ortho">
          <path d="M1.500 1v8.500H10M1.500 6.500h3v3" stroke="#777" />
        </StatusButton>
        <StatusButton label="Polar" on caret>
          <circle cx="5" cy="6" r="4" stroke="#456" />
          <path d="M4 6h6.500M5 6l4-4" stroke="#456" />
        </StatusButton>
        <StatusButton label="Isodraft" caret>
          <path d="M5.500 0v11" stroke="#8b8" />
          <path d="M1 1l9 9" stroke="#c66" />
        </StatusButton>
        <StatusButton label="Object snap tracking" on>
          <path d="M1 9h9M1 9l8-7" stroke="#456" strokeWidth="1.200" />
        </StatusButton>
        <span className="w-[2px]" />
        <StatusButton label="Object snap" on caret>
          <path d="M2.500 2.500h7.500V10H2.500z" stroke="#678" />
          <path d="M1 1h3v3H1z" fill="#fff" stroke="#678" />
        </StatusButton>
        <StatusButton label="Annotation visibility" on>
          <path d="M1 10l4-8 1.500 4L9 10 5.500 8z" fill="#222" stroke="#222" />
          <circle cx="9" cy="2.500" r="1.500" stroke="#456" strokeWidth="0.800" />
        </StatusButton>
        <span className="w-[2px]" />
        <StatusButton label="Workspace" caret>
          <circle cx="5.500" cy="5.500" r="3" stroke="#444" strokeWidth="2" />
          <path d="M5.500 0v2M5.500 9v2M0 5.500h2M9 5.500h2M1.600 1.600l1.500 1.500M8 8l1.500 1.500M9.400 1.600L8 3M3 8L1.600 9.400" stroke="#444" strokeWidth="1.600" />
        </StatusButton>
        <StatusButton label="Isolate objects">
          <path d="M0.500 0.500h4v4h-4zM5.500 7l2.500 3.500H3z" stroke="#666" strokeWidth="0.900" />
          <circle cx="8.500" cy="4.500" r="1.800" stroke="#666" strokeWidth="0.900" />
        </StatusButton>
        <StatusButton label="Hardware acceleration">
          <path d="M1 1h6l2 2v6H1z" fill="#4a8cc2" />
          <path d="M1 4h7M1 7h5" stroke="#f0d46a" strokeWidth="1.500" />
          <path d="M5 7.500l2 2 3.500-4" stroke="#3fa152" strokeWidth="1.600" />
        </StatusButton>
        <StatusButton label="Warning">
          <path d="M5.500 0.500L11 10H0z" fill="#555" />
          <path d="M5.500 4v3M5.500 8v1" stroke="#eee" />
        </StatusButton>
        <span className="w-1" />
        <StatusButton label="Clean screen">
          <path d="M0.500 1.500h10v8h-10z" stroke="#777" fill="#f6f6f6" />
          <path d="M6.500 3.500h2v2M4.500 7.500h-2v-2" stroke="#555" />
        </StatusButton>
        <StatusButton label="Customization">
          <path d="M0 1.500h11M0 5.500h11M0 9.500h11" stroke="#555" strokeWidth="1.200" />
        </StatusButton>
      </div>
    </footer>
  );
}

export default function App() {
  return (
    <div className="flex h-screen flex-col overflow-hidden bg-[#a9a9a9] font-['Roboto',sans-serif] text-[8px] leading-[12px] text-[#222]">
      <Header />
      <Ribbon />
      <FileTabs />
      <div className="h-[2px] shrink-0 bg-[#efefef]" />
      <div className="flex min-h-0 flex-1">
        <TaskPane />
        <main className="flex min-w-0 flex-1 flex-col">
          <div className="relative min-h-0 flex-1 border-t border-[#555] bg-black">
            <CityMap />
            <WindowControls className="absolute right-[7px] top-[6px] flex gap-[6px]" />
            <DrawingSetDialog />
          </div>
          <CommandLine />
        </main>
      </div>
      <StatusBar />
    </div>
  );
}
